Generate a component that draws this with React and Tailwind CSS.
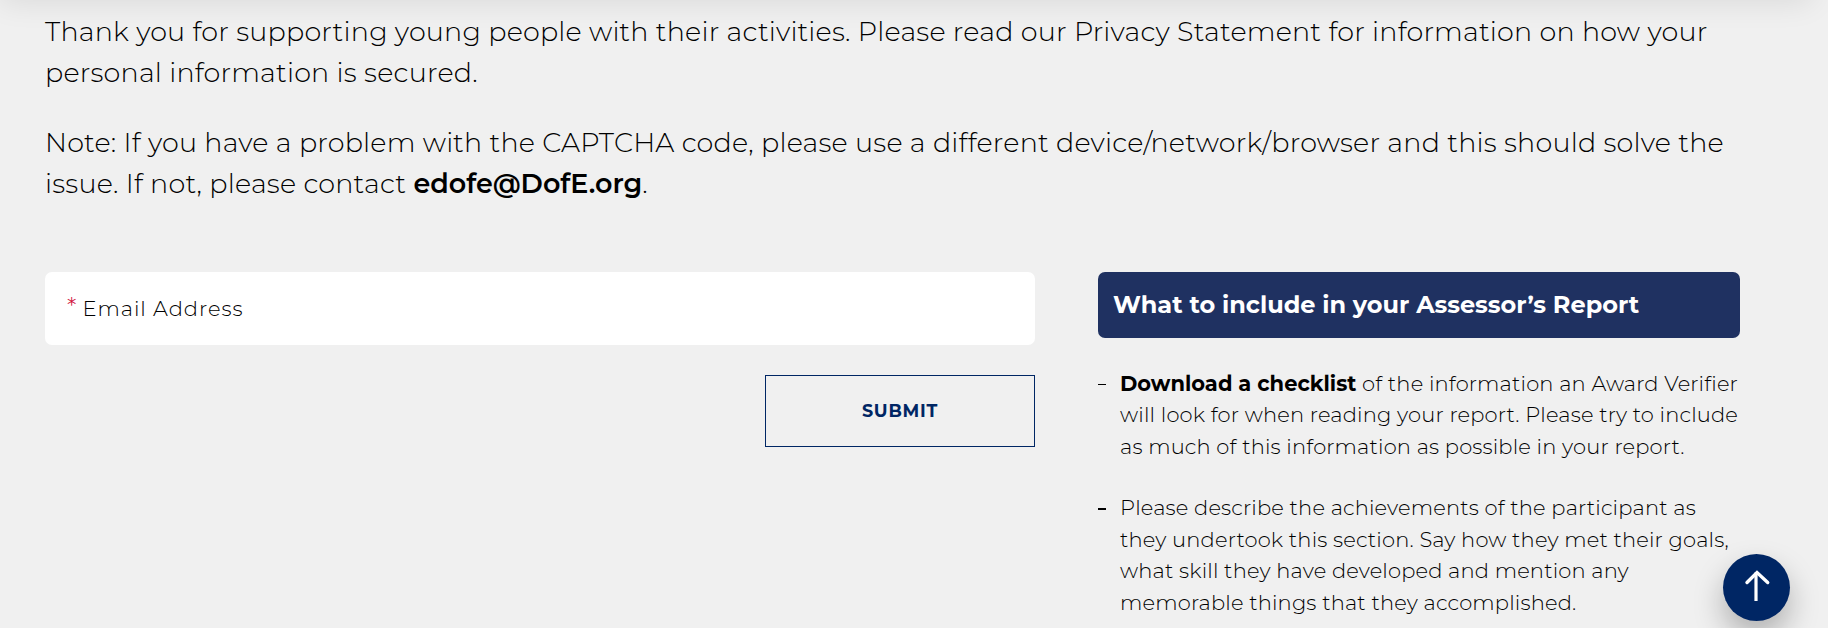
const tips = [
  {
    lead: "Download a checklist",
    lines: [
      " of the information an Award Verifier",
      "will look for when reading your report. Please try to include",
      "as much of this information as possible in your report.",
    ],
    dash: "h-px",
  },
  {
    lines: [
      "Please describe the achievements of the participant as",
      "they undertook this section. Say how they met their goals,",
      "what skill they have developed and mention any",
      "memorable things that they accomplished.",
    ],
    dash: "h-0.5",
  },
];

const Intro = () => {
  return (
    <div className="text-[27px] leading-[41px] font-light tracking-[0.195px] whitespace-nowrap">
      <p>
        Thank you for supporting young people with their activities. Please read our Privacy Statement for information on how your
        <br />
        personal information is secured.
      </p>
      <p className="mt-[29px]">
        Note: If you have a problem with the CAPTCHA code, please use a different device/network/browser and this should solve the
        <br />
        issue. If not, please contact <a href="#" className="font-semibold tracking-normal">edofe@DofE.org</a>.
      </p>
    </div>
  );
};

const EmailForm = () => {
  return (
    <form className="w-[990px] flex flex-col items-end">
      <label className="w-full h-[73px] px-[22px] flex items-center bg-white rounded-[7px] text-[21px] font-light tracking-[0.95px]">
        <span className="mr-1.5 -mt-1 text-[25px] tracking-normal text-[#d0103a]">*</span>
        Email Address
      </label>
      <button
        type="button"
        className="mt-[30px] w-[270px] h-[72px] border border-[#002664] text-[#002664] text-[17.5px] font-bold tracking-[0.75px]"
      >
        SUBMIT
      </button>
    </form>
  );
};

const Tips = () => {
  return (
    <aside className="w-[642px]">
      <h2 className="h-[66px] pl-[15px] flex items-center rounded-[7px] bg-[#1f3161] text-white text-[24px] font-bold">
        What to include in your Assessor’s Report
      </h2>
      <ul className="mt-[29.5px] flex flex-col gap-[30px] text-[21px] leading-[31.5px] font-light tracking-[0.16px] whitespace-nowrap">
        {tips.map((tip) => (
          <li key={tip.dash} className="flex">
            <span className={`mt-4 mr-3.5 w-2 shrink-0 bg-black ${tip.dash}`} />
            <p>
              {tip.lead && <a href="#" className="font-bold tracking-normal">{tip.lead}</a>}
              {tip.lines.map((line) => <span key={line}>{line}<br /></span>)}
            </p>
          </li>
        ))}
      </ul>
    </aside>
  );
};

const BackToTop = () => {
  return (
    <button
      type="button"
      aria-label="Back to top"
      className="fixed right-[38px] bottom-[7px] size-[67px] rounded-full bg-[#002664] shadow-[0_15px_30px_rgba(0,0,0,0.27)]"
    >
      <svg viewBox="0 0 67 67" className="size-full" fill="none" stroke="white">
        <path d="M33 18.5V47" strokeWidth="3.2" />
        <path d="M24 28.5L34 18.5L44.7 28.5" strokeWidth="3.4" strokeLinecap="round" />
      </svg>
    </button>
  );
};

const App = () => {
  return (
    <div className="relative h-[628px] overflow-hidden bg-[#f0f0f0] text-black font-['Montserrat','Open_Sans',sans-serif]">
      {/* shadow of the page header above */}
      <div className="absolute -top-20 left-0 right-4 h-20 shadow-[0_3px_30px_rgba(0,0,0,0.09)]" />
      <main className="relative pt-[11px] pl-[45px]">
        <Intro />
        <div className="mt-[68px] flex gap-[63px]">
          <EmailForm />
          <Tips />
        </div>
      </main>
      <BackToTop />
    </div>
  );
};

export default App;
